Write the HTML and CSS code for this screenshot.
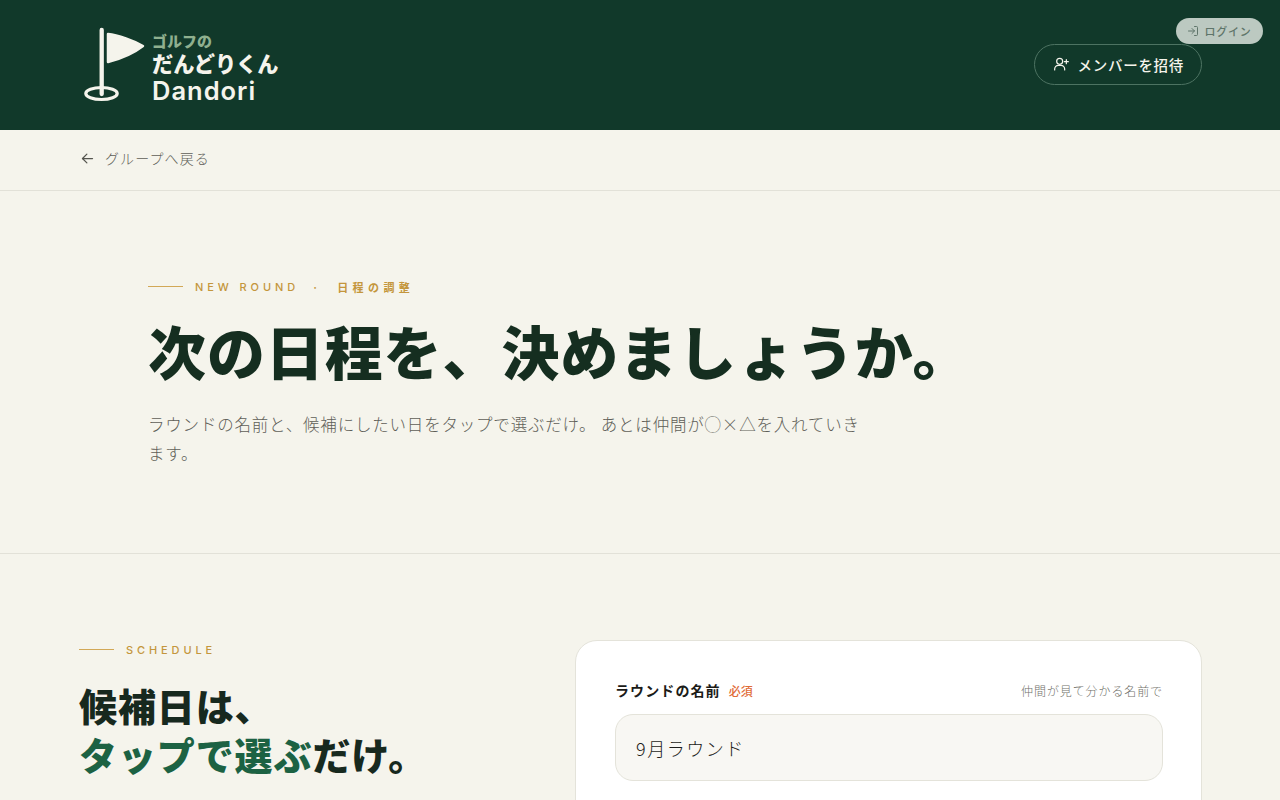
FILE: index.html
```html
<!DOCTYPE html>
<html lang="ja">
<head>
<meta charset="utf-8">
<title>ゴルフのだんどりくん Dandori</title>
<link rel="stylesheet" href="styles.css">
</head>
<body>
<a class="login-pill" href="#">
  <svg class="login-icon" viewBox="0 0 24 24" fill="none" stroke="currentColor" stroke-width="2" stroke-linecap="round" stroke-linejoin="round"><path d="M15 3h4a2 2 0 0 1 2 2v14a2 2 0 0 1-2 2h-4"/><path d="M10 17l5-5-5-5"/><path d="M15 12H3"/></svg>
  <span>ログイン</span>
</a>
<header class="site-header">
  <a class="logo" href="#">
    <svg class="logo-mark" viewBox="0 0 62 78" fill="none">
      <path d="M17.700 4v64" stroke="#f5f4ec" stroke-width="4.300" stroke-linecap="round"/>
      <path d="M24 8C34 9 50 15 59 20C50 27 36 33 24 36Z" fill="#f5f4ec" stroke="#f5f4ec" stroke-width="2.500" stroke-linejoin="round"/>
      <ellipse cx="17.500" cy="67.500" rx="15.700" ry="6" stroke="#f5f4ec" stroke-width="3.200"/>
    </svg>
    <span class="logo-text">
      <span class="logo-small">ゴルフの</span>
      <span class="logo-main">だんどりくん</span>
      <span class="logo-latin">Dandori</span>
    </span>
  </a>
  <a class="invite-btn" href="#">
    <svg class="invite-icon" viewBox="0 0 24 24" fill="none" stroke="currentColor" stroke-width="1.800" stroke-linecap="round" stroke-linejoin="round"><circle cx="10" cy="8" r="4.500"/><path d="M2.500 21v-1.500a5.500 5.500 0 0 1 5.500-5.500h4a5.500 5.500 0 0 1 5.500 5.500V21"/><path d="M20 5.500v6M17 8.500h6"/></svg>
    <span>メンバーを招待</span>
  </a>
</header>
<nav class="back-bar">
  <a class="back-link" href="#">
    <svg class="back-icon" viewBox="0 0 24 24" fill="none" stroke="currentColor" stroke-width="2" stroke-linecap="round" stroke-linejoin="round"><path d="M20 12H4"/><path d="M11 5l-7 7 7 7"/></svg>
    <span>グループへ戻る</span>
  </a>
</nav>
<section class="hero">
  <div class="eyebrow hero-eyebrow"><span class="rule"></span><span class="eyebrow-latin">NEW ROUND</span><span class="eyebrow-dot">·</span><span class="eyebrow-ja">日程の調整</span></div>
  <h1 class="hero-title">次の日程を、決めましょうか。</h1>
  <p class="hero-lead">ラウンドの名前と、候補にしたい日をタップで選ぶだけ。 あとは仲間が◯×△を入れていきます。</p>
</section>
<main class="schedule">
  <div class="schedule-intro">
    <div class="eyebrow"><span class="rule"></span><span class="eyebrow-latin">SCHEDULE</span></div>
    <h2 class="schedule-title">候補日は、<br><em>タップで選ぶ</em>だけ。</h2>
  </div>
  <form class="card">
    <div class="field-head">
      <label class="field-label">ラウンドの名前<span class="required">必須</span></label>
      <span class="field-hint">仲間が見て分かる名前で</span>
    </div>
    <div class="text-input">9月ラウンド</div>
  </form>
</main>
</body>
</html>
```
FILE: styles.css
```css
* { box-sizing: border-box; }
html, body { margin: 0; padding: 0; }
html { height: 800px; overflow: hidden; }
body {
  background: #f5f4ec;
  color: #16301f;
  font-family: "Noto Sans CJK JP", "Noto Sans", sans-serif;
  position: relative;
}
a { color: inherit; text-decoration: none; }

.site-header {
  height: 130px;
  background: #11392a;
  display: flex;
  align-items: center;
  justify-content: space-between;
  padding: 0 78px 0 84px;
}
.logo { display: flex; align-items: center; gap: 6px; color: #f5f4ec; }
.logo-mark { width: 62px; height: 78px; display: block; }
.logo-text { display: flex; flex-direction: column; font-weight: 900; line-height: 1; margin-top: 5px; }
.logo-small { font-size: 15px; color: #8fb08f; line-height: 18px; }
.logo-main { font-size: 21.200px; line-height: 26px; }
.logo-latin { font-family: "Inter", sans-serif; font-weight: 600; font-size: 25.500px; line-height: 26px; letter-spacing: 1px; margin-top: 2px; }

.invite-btn {
  display: flex;
  align-items: center;
  gap: 9px;
  height: 41px;
  padding: 0 17px 0 18px;
  border: 1px solid #4d7362;
  border-radius: 21px;
  color: #f5f4ec;
  font-size: 14.500px;
  font-weight: 500;
  letter-spacing: .7px;
  margin-top: -2px;
}
.invite-icon { width: 16px; height: 16px; }

.login-pill {
  position: absolute;
  top: 18px;
  left: 1176px;
  width: 87px;
  height: 26px;
  border-radius: 13px;
  background: #bcc9c1;
  color: #5f756a;
  font-size: 11px;
  font-weight: 500;
  letter-spacing: .8px;
  display: flex;
  align-items: center;
  justify-content: center;
  gap: 5px;
}
.login-icon { width: 12px; height: 12px; }

.back-bar {
  height: 61px;
  padding: 0 80px 4px;
  display: flex;
  align-items: center;
  border-bottom: 1px solid #e2e1d8;
}
.back-link { display: flex; align-items: center; gap: 10px; color: #5f5f58; font-size: 14px; font-weight: 300; letter-spacing: 1.100px; }
.back-icon { width: 15px; height: 15px; color: #55554f; }

.hero {
  height: 363px;
  padding: 87px 148px 0;
  border-bottom: 1px solid #e2e1d8;
}
.eyebrow { display: flex; align-items: center; font-size: 11px; font-weight: 500; letter-spacing: 3.900px; color: #c4963c; line-height: 18px; }
.rule { width: 35px; height: 1px; background: #d2a857; margin: 0 12px 1px 0; }
.eyebrow-latin { font-family: "Inter", sans-serif; }
.eyebrow-dot { margin: 0 15px 0 13px; }
.eyebrow-ja { font-weight: 700; letter-spacing: 4.400px; }
.hero-title { margin: 17px 0 0; font-size: 58px; line-height: 74px; font-weight: 900; letter-spacing: .9px; color: #152e20; }
.hero-lead { margin: 23px 0 0; width: 720px; font-size: 16.500px; line-height: 29px; font-weight: 300; letter-spacing: .8px; color: #5f5f58; }

.schedule {
  padding: 87px 78px 0 79px;
  display: grid;
  grid-template-columns: 496px 1fr;
  height: 400px;
}
.schedule-title { margin: 21px 0 0; font-size: 38px; line-height: 49px; font-weight: 900; letter-spacing: .9px; color: #17291e; }
.schedule-title em { font-style: normal; color: #1c6243; }

.card {
  background: #fff;
  border: 1px solid #e4e3da;
  border-radius: 22px 22px 0 0;
  margin-top: -1px;
  padding: 38px 38px 0 39px;
  height: 400px;
}
.field-head { display: flex; justify-content: space-between; align-items: center; line-height: 22px; }
.field-label { font-size: 14px; font-weight: 700; letter-spacing: 1.100px; color: #1b1b18; }
.required { margin-left: 8px; font-size: 12px; font-weight: 500; letter-spacing: 0; color: #df6b37; }
.field-hint { font-size: 12px; font-weight: 300; color: #71716b; letter-spacing: .9px; }
.text-input {
  margin-top: 12px;
  height: 67px;
  display: flex;
  align-items: center;
  padding: 0 20px;
  background: #f8f7f3;
  border: 1px solid #e4e3da;
  border-radius: 18px;
  font-size: 18px;
  font-weight: 300;
  letter-spacing: 1.500px;
  color: #1d1d1a;
}
```
